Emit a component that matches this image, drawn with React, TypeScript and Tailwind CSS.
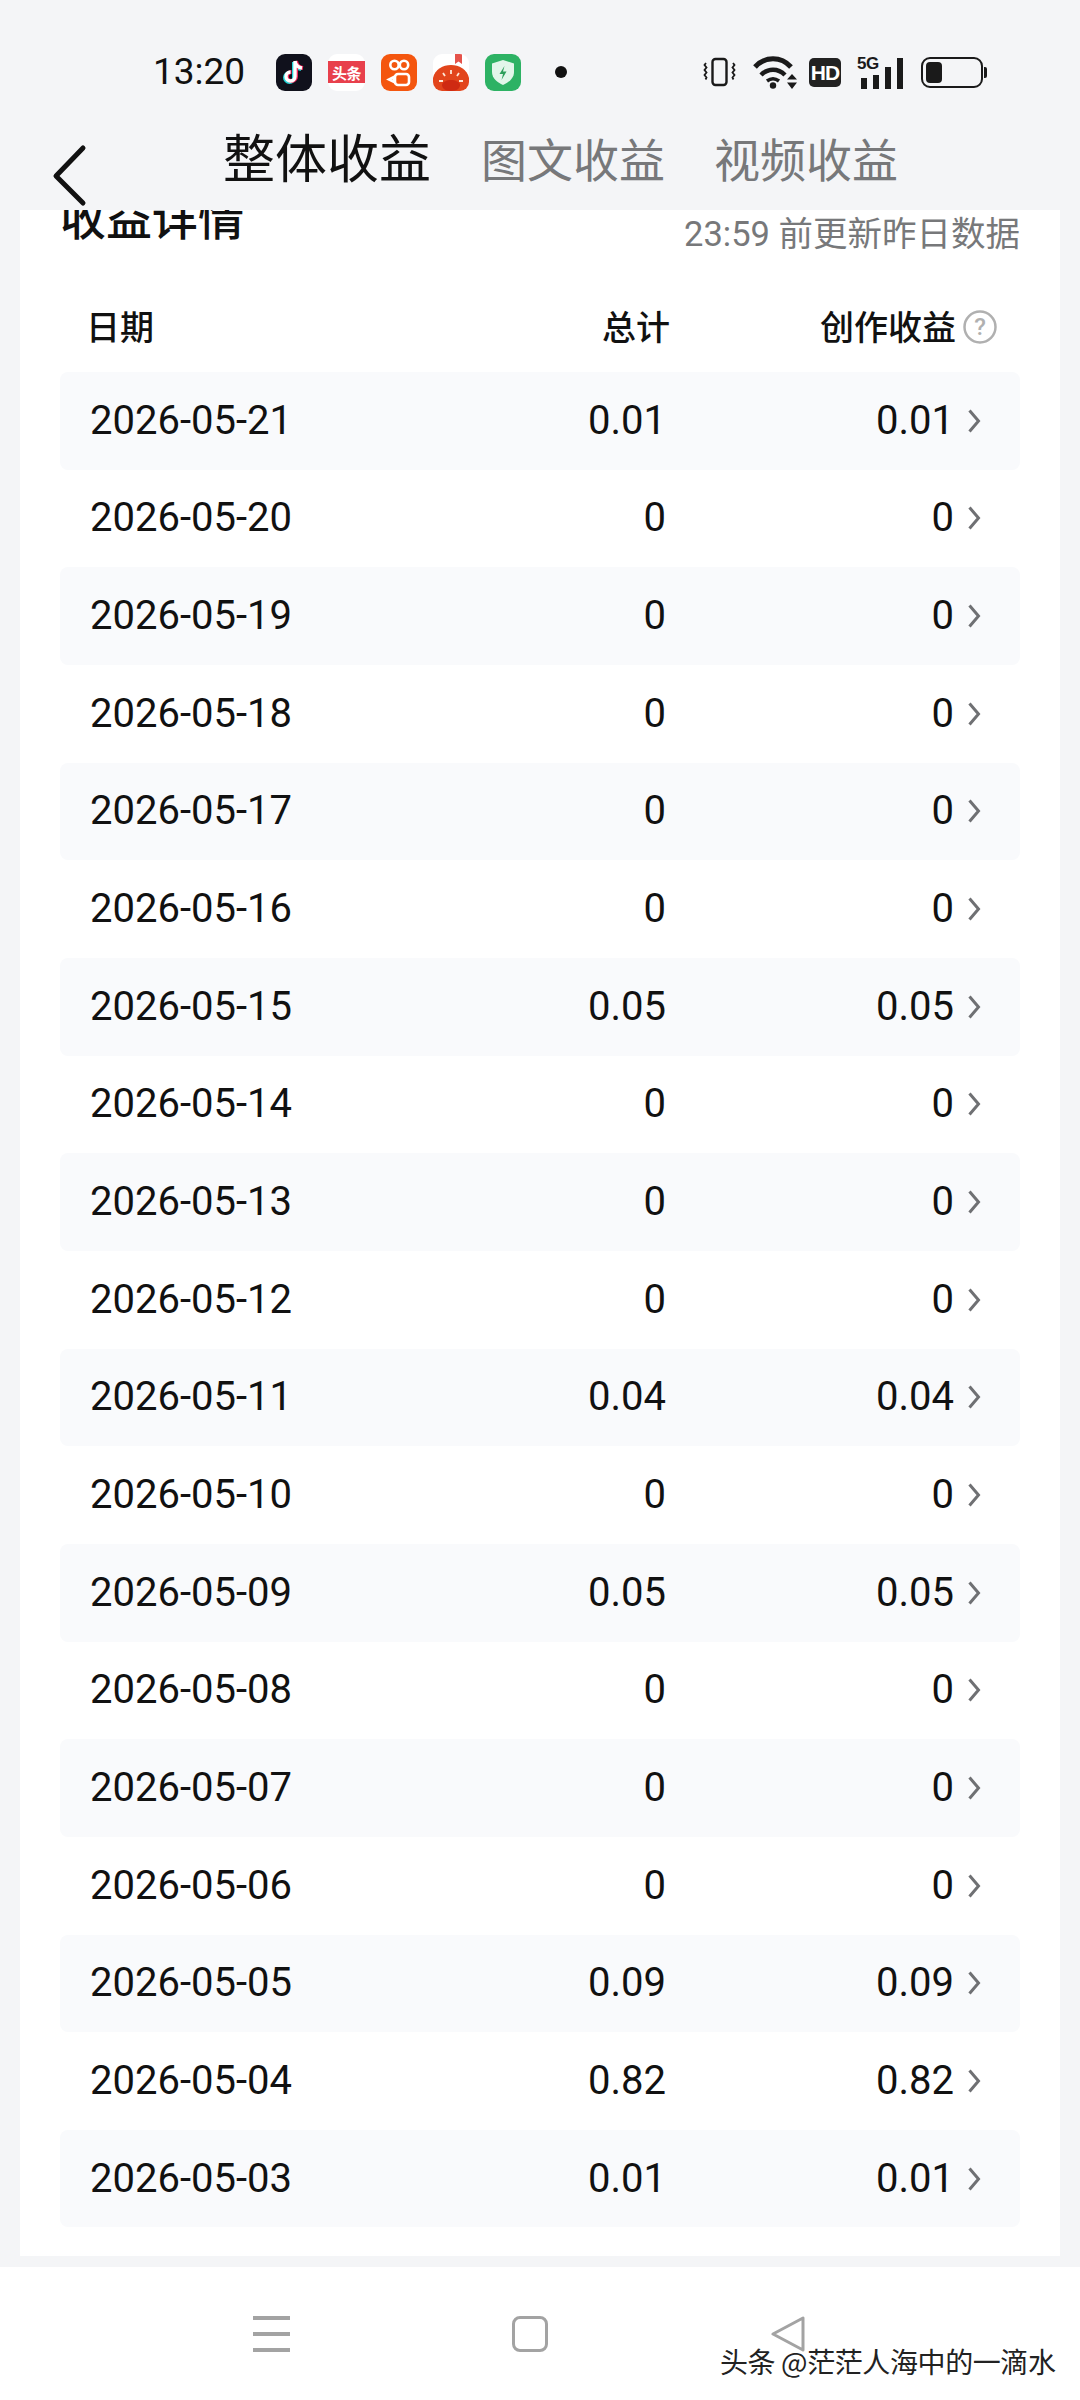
import React from "react";

const rows = [
  { date: "2026-05-21", value: "0.01" },
  { date: "2026-05-20", value: "0" },
  { date: "2026-05-19", value: "0" },
  { date: "2026-05-18", value: "0" },
  { date: "2026-05-17", value: "0" },
  { date: "2026-05-16", value: "0" },
  { date: "2026-05-15", value: "0.05" },
  { date: "2026-05-14", value: "0" },
  { date: "2026-05-13", value: "0" },
  { date: "2026-05-12", value: "0" },
  { date: "2026-05-11", value: "0.04" },
  { date: "2026-05-10", value: "0" },
  { date: "2026-05-09", value: "0.05" },
  { date: "2026-05-08", value: "0" },
  { date: "2026-05-07", value: "0" },
  { date: "2026-05-06", value: "0" },
  { date: "2026-05-05", value: "0.09" },
  { date: "2026-05-04", value: "0.82" },
  { date: "2026-05-03", value: "0.01" },
];

const AppIcons: React.FC = () => (
  <div className="flex items-center gap-[16px]">
    {/* tiktok */}
    <div className="w-[36px] h-[37px] rounded-[9px] bg-[#10111c] flex items-center justify-center">
      <svg width="26" height="28" viewBox="0 0 26 28" fill="none">
        <path d="M14 3v15.500a4.500 4.500 0 1 1-4.500-4.500M14 3c.5 4 3 6.500 7 7" stroke="#25d9dc" strokeWidth="4" transform="translate(-1 1)" />
        <path d="M14 3v15.500a4.500 4.500 0 1 1-4.500-4.500M14 3c.5 4 3 6.500 7 7" stroke="#f0295a" strokeWidth="4" transform="translate(1 0)" />
        <path d="M14 3v15.500a4.500 4.500 0 1 1-4.500-4.500M14 3c.5 4 3 6.500 7 7" stroke="#ffffff" strokeWidth="3.400" />
      </svg>
    </div>
    {/* toutiao */}
    <div className="w-[37px] h-[37px] rounded-[9px] bg-white flex items-center justify-center">
      <div className="w-[37px] h-[22px] bg-[#e8404c] flex items-center justify-center text-white text-[15px] font-bold leading-none tracking-[-0.5px] font-['Noto_Sans_CJK_SC',sans-serif]">
        头条
      </div>
    </div>
    {/* kuaishou */}
    <div className="w-[36px] h-[37px] rounded-[9px] bg-[#f4560f] flex items-center justify-center">
      <svg width="26" height="29" viewBox="0 0 26 29" fill="none" stroke="#fff" strokeWidth="2.600">
        <circle cx="8.500" cy="7" r="4.200" />
        <circle cx="18" cy="7" r="4.200" />
        <rect x="9" y="16" width="14" height="11" rx="3" />
        <path d="M8 19l-5 2.500L8 24z" />
      </svg>
    </div>
    {/* tomato novel */}
    <div className="w-[36px] h-[37px] rounded-[9px] bg-white flex items-end justify-center relative overflow-hidden">
      <svg width="36" height="37" viewBox="0 0 36 37">
        <path d="M22 0h7v10l-3.500-2.500L22 10z" fill="#e5534b" />
        <path d="M0 37V24C2 15 10 11 18 11s16 4 18 13v13z" fill="#e2451c" />
        <path d="M18 37c-6 0-9-3-9-6s5-5 9-5 9 2 9 5-3 6-9 6z" fill="#cf2a12" />
        <path d="M18 16v4M10 19l2 3M26 19l-2 3M6 27h4M26 27h4" stroke="#fde8d8" strokeWidth="1.800" />
      </svg>
    </div>
    {/* shield */}
    <div className="w-[36px] h-[37px] rounded-[9px] bg-[#2db264] flex items-center justify-center">
      <svg width="24" height="27" viewBox="0 0 24 27">
        <path d="M12 1l11 3.500v8.500c0 6.500-5.500 10.500-11 13C6.500 23.500 1 19.500 1 13V4.500z" fill="#e2f6ea" />
        <path d="M13.500 7l-5 8h3.500l-1.500 6 5-8.500h-3.500z" fill="#2c9f5a" />
      </svg>
    </div>
    <div className="w-[12px] h-[12px] rounded-full bg-[#111] ml-[18px]" />
  </div>
);

const SystemIcons: React.FC = () => (
  <div className="flex items-center ml-auto mr-[93px]">
    <svg width="33" height="30" viewBox="0 0 33 30" fill="none" stroke="#1a1a1a">
      <rect x="9.500" y="2" width="14" height="26" rx="3" strokeWidth="2.400" />
      <path d="M3 6l-1.500 2 2 2.500-2 2.500 2 2.500-2 2.500 2 2.500-1 2M30 6l1.500 2-2 2.500 2 2.500-2 2.500 2 2.500-2 2.500 1 2" strokeWidth="1.800" />
    </svg>
    <svg className="ml-[16px]" width="46" height="34" viewBox="0 0 46 34" fill="none">
      <path d="M3 12C13 1 29 1 39 12" stroke="#1a1a1a" strokeWidth="5" />
      <path d="M9 20c7-7 17-7 24 0" stroke="#1a1a1a" strokeWidth="4.500" />
      <path d="M15 26c4-3 8-3 12 0" stroke="#1a1a1a" strokeWidth="3.500" />
      <circle cx="21" cy="30.500" r="3.200" fill="#1a1a1a" />
      <path d="M40 19l5 5.500H35zM40 34l5-6.500H35z" fill="#1a1a1a" />
    </svg>
    <div className="ml-[11px] w-[32px] h-[29px] rounded-[5px] bg-[#222] flex items-center justify-center text-white text-[21px] font-bold leading-none font-['Liberation_Sans',sans-serif] tracking-[-1px]">
      HD
    </div>
    <div className="relative ml-[16px] w-[48px] h-[33px]">
      <span className="absolute left-0 -top-[1px] text-[17px] font-bold leading-none text-[#1a1a1a] font-['Liberation_Sans',sans-serif] tracking-[-0.5px]">
        5G
      </span>
      <div className="absolute left-[4px] bottom-0 flex items-end gap-[6px]">
        <div className="w-[6px] h-[11px] bg-[#1a1a1a]" />
        <div className="w-[6px] h-[14px] bg-[#1a1a1a]" />
        <div className="w-[6px] h-[22px] bg-[#1a1a1a]" />
        <div className="w-[6px] h-[31px] bg-[#1a1a1a]" />
      </div>
    </div>
    <div className="flex items-center ml-[16px]">
      <div className="w-[62px] h-[31px] rounded-[9px] border-2 border-[#1a1a1a] p-[3px]">
        <div className="w-[16px] h-full rounded-[4px] bg-[#1a1a1a]" />
      </div>
      <div className="w-[3px] h-[11px] bg-[#1a1a1a] ml-[1px] rounded-r-[2px]" />
    </div>
  </div>
);

export default function App() {
  return (
    <div className="w-[1080px] h-[2400px] flex flex-col bg-white overflow-hidden font-['Roboto','Noto_Sans_CJK_SC',sans-serif] text-[#111]">
      {/* status bar and tabs */}
      <div className="h-[210px] shrink-0 bg-[#f4f5f7] relative z-10">
        <div className="flex items-center pt-[20px] pl-[153px] h-[124px]">
          <span className="text-[37px] leading-[40px] text-[#111] w-[123px]">13:20</span>
          <AppIcons />
          <SystemIcons />
        </div>
        <div className="flex items-center h-[70px] pl-[223px] pt-[4px]">
          <span className="text-[52px] leading-[70px] text-[#111]">整体收益</span>
          <span className="text-[46px] leading-[70px] text-[#77787a] ml-[50px]">图文收益</span>
          <span className="text-[46px] leading-[70px] text-[#77787a] ml-[49px]">视频收益</span>
        </div>
        <svg className="absolute left-[50px] top-[143px]" width="40" height="68" viewBox="0 0 40 68" fill="none">
          <path d="M33 5L6 33l27 27" stroke="#111" strokeWidth="5" strokeLinecap="round" strokeLinejoin="round" />
        </svg>
      </div>

      {/* details */}
      <div className="h-[2057px] shrink-0 bg-[#f4f5f7] px-[20px]">
        <div className="bg-white h-[2046px] px-[40px] overflow-hidden">
          <div className="flex justify-between items-start h-[65px]">
            <span className="text-[46px] leading-[60px] font-medium -mt-[21px]">收益详情</span>
            <span className="text-[34.5px] leading-[44px] text-[#77787a] mt-[2px]">23:59 前更新昨日数据</span>
          </div>
          <div className="flex items-center h-[97px] pt-[10px] text-[34px] font-medium">
            <span className="ml-[26px]">日期</span>
            <span className="ml-auto">总计</span>
            <span className="ml-[150px] flex items-center">
              创作收益
              <svg className="ml-[6px] -mt-[3px]" width="36" height="36" viewBox="0 0 36 36" fill="none">
                <circle cx="18" cy="18" r="15.500" stroke="#b0b0b0" strokeWidth="2.500" />
                <text x="18" y="26" textAnchor="middle" fontSize="24" fill="#b0b0b0" fontFamily="Roboto">?</text>
              </svg>
              <span className="w-[22px]" />
            </span>
          </div>
          <div className="flex flex-col">
            {rows.map((row, i) => (
              <div
                key={row.date}
                className={`h-[97.67px] shrink-0 flex items-center rounded-[8px] text-[40px] ${i % 2 === 0 ? "bg-[#f9fafc]" : ""}`}
              >
                <span className="ml-[30px]">{row.date}</span>
                <span className="ml-auto w-[200px] text-right">{row.value}</span>
                <span className="ml-[66px] w-[222px] text-right">{row.value}</span>
                <svg className="ml-[13px] mr-[39px]" width="14" height="26" viewBox="0 0 14 26" fill="none">
                  <path d="M2.500 2.500L11.500 13l-9 10.500" stroke="#6f7073" strokeWidth="3" />
                </svg>
              </div>
            ))}
          </div>
        </div>
      </div>

      {/* nav bar */}
      <div className="h-[133px] shrink-0 bg-white relative flex items-start pt-[49px]">
        <div className="ml-[253px] w-[37px] h-[36px] flex flex-col justify-between">
          <div className="h-[4px] bg-[#a3a3a3]" />
          <div className="h-[4px] bg-[#a3a3a3]" />
          <div className="h-[4px] bg-[#a3a3a3]" />
        </div>
        <div className="ml-[222px] w-[36px] h-[36px] rounded-[8px] border-[3px] border-[#a3a3a3]" />
        <svg className="ml-[222px]" width="36" height="36" viewBox="0 0 36 36" fill="none">
          <path d="M33 2v32L3 18z" stroke="#a3a3a3" strokeWidth="3" strokeLinejoin="round" />
        </svg>
        <span className="absolute left-[720px] top-[77px] text-[28px] leading-[34px] text-[#222] [text-shadow:0_0_2px_#fff] font-['Noto_Sans_CJK_SC',sans-serif] tracking-[-0.4px] whitespace-nowrap">
          头条 @茫茫人海中的一滴水
        </span>
      </div>
    </div>
  );
}
